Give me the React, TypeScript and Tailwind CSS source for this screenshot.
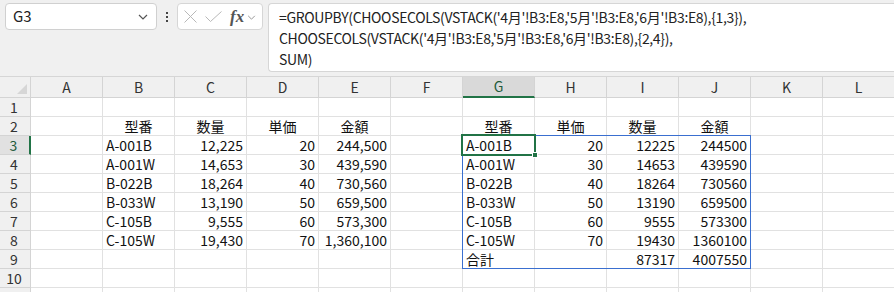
import React from "react";

const COLS = ["A", "B", "C", "D", "E", "F", "G", "H", "I", "J", "K", "L"];

type Align = "l" | "r" | "c";
type Cell = { t: string; a: Align };

const source = [
  ["A-001B", "12,225", "20", "244,500"],
  ["A-001W", "14,653", "30", "439,590"],
  ["B-022B", "18,264", "40", "730,560"],
  ["B-033W", "13,190", "50", "659,500"],
  ["C-105B", "9,555", "60", "573,300"],
  ["C-105W", "19,430", "70", "1,360,100"],
];

const grouped = [
  ["A-001B", "20", "12225", "244500"],
  ["A-001W", "30", "14653", "439590"],
  ["B-022B", "40", "18264", "730560"],
  ["B-033W", "50", "13190", "659500"],
  ["C-105B", "60", "9555", "573300"],
  ["C-105W", "70", "19430", "1360100"],
];

function buildCells() {
  const cells: Record<string, Cell> = {};
  ["型番", "数量", "単価", "金額"].forEach((t, i) => {
    cells[`${"BCDE"[i]}2`] = { t, a: "c" };
  });
  ["型番", "単価", "数量", "金額"].forEach((t, i) => {
    cells[`${"GHIJ"[i]}2`] = { t, a: "c" };
  });
  source.forEach((row, r) => {
    row.forEach((t, i) => {
      cells[`${"BCDE"[i]}${r + 3}`] = { t, a: i === 0 ? "l" : "r" };
    });
  });
  grouped.forEach((row, r) => {
    row.forEach((t, i) => {
      cells[`${"GHIJ"[i]}${r + 3}`] = { t, a: i === 0 ? "l" : "r" };
    });
  });
  cells["G9"] = { t: "合計", a: "l" };
  cells["I9"] = { t: "87317", a: "r" };
  cells["J9"] = { t: "4007550", a: "r" };
  return cells;
}

const cells = buildCells();

const alignClass: Record<Align, string> = {
  l: "justify-start pl-[3px]",
  r: "justify-end pr-[3px]",
  c: "justify-center",
};

function Chevron({ className }: { className: string }) {
  return (
    <svg viewBox="0 0 10 6" className={className} fill="none" stroke="currentColor" strokeWidth="1.2">
      <path d="M1 1l4 4 4-4" />
    </svg>
  );
}

function Toolbar() {
  return (
    <div className="flex h-[77px] items-start border-b border-[#d6d6d6] bg-[#f0f0f0] pl-[5px] pt-[3px]">
      <div className="flex h-[27px] w-[152px] items-center justify-between rounded-[4px] border border-[#d0d0d0] bg-white pl-[7px] pr-[8px]">
        <span className="text-[15px] text-[#222]">G3</span>
        <Chevron className="h-[6px] w-[10px] text-[#555]" />
      </div>
      <div className="flex h-[27px] w-[20px] flex-col items-center justify-center gap-[2px]">
        <span className="h-[2px] w-[2px] bg-[#444]" />
        <span className="h-[2px] w-[2px] bg-[#444]" />
        <span className="h-[2px] w-[2px] bg-[#444]" />
      </div>
      <div className="flex h-[27px] w-[86px] items-center rounded-[4px] border border-[#d6d6d6] bg-white pl-[6px]">
        <svg viewBox="0 0 13 13" className="h-[13px] w-[13px]" fill="none" stroke="#b8b8b8" strokeWidth="1">
          <path d="M0.5 0.5l12 12M12.5 0.5l-12 12" />
        </svg>
        <svg viewBox="0 0 17 11" className="ml-[8px] h-[11px] w-[17px]" fill="none" stroke="#b8b8b8" strokeWidth="1">
          <path d="M0.5 5.5l5 5 11-10" />
        </svg>
        <span className="ml-[8px] font-['Liberation_Serif',serif] text-[17px] font-bold italic leading-none text-[#555]">
          fx
        </span>
        <Chevron className="ml-[3px] mt-[2px] h-[5px] w-[9px] text-[#999]" />
      </div>
      <div className="ml-[5px] h-[69px] flex-1 rounded-l-[4px] border border-r-0 border-[#d6d6d6] bg-white pl-[10px] pt-[3px] text-[14px] leading-[21px] tracking-[-0.35px] text-[#222]">
        <div>=GROUPBY(CHOOSECOLS(VSTACK('4月'!B3:E8,'5月'!B3:E8,'6月'!B3:E8),{"{1,3}"}),</div>
        <div>CHOOSECOLS(VSTACK('4月'!B3:E8,'5月'!B3:E8,'6月'!B3:E8),{"{2,4}"}),</div>
        <div>SUM)</div>
      </div>
    </div>
  );
}

function Sheet() {
  const rows = Array.from({ length: 11 }, (_, i) => i + 1);
  return (
    <div className="relative">
      <div className="grid grid-cols-[31px_repeat(12,72px)]">
        <div className="relative h-[21px] border-r border-b border-[#d4d4d4] bg-[#f0f0f0]">
          <svg viewBox="0 0 10 10" className="absolute bottom-[3px] right-[3px] h-[10px] w-[10px]">
            <path d="M10 0V10H0Z" fill="#d6d6d6" />
          </svg>
        </div>
        {COLS.map((c) =>
          c === "G" ? (
            <div
              key={c}
              className="flex h-[21px] items-center justify-center border-r border-b-2 border-r-[#d4d4d4] border-b-[#217346] bg-[#d9d9d9] text-[14px] text-[#1e5a3a]"
            >
              {c}
            </div>
          ) : (
            <div
              key={c}
              className="flex h-[21px] items-center justify-center border-r border-b border-[#d4d4d4] bg-[#f0f0f0] text-[14px] text-[#333]"
            >
              {c}
            </div>
          )
        )}
        {rows.map((r) => (
          <React.Fragment key={r}>
            {r === 3 ? (
              <div className="flex h-[19px] items-center justify-center border-r-2 border-b border-r-[#217346] border-b-[#d4d4d4] bg-[#e1e1e1] pr-[2px] text-[14px] text-[#1e5a3a]">
                {r}
              </div>
            ) : (
              <div className="flex h-[19px] items-center justify-center border-r border-b border-[#d4d4d4] bg-[#f0f0f0] pr-[2px] text-[14px] text-[#333]">
                {r < 11 ? r : ""}
              </div>
            )}
            {COLS.map((c) => {
              const cell = cells[`${c}${r}`];
              return (
                <div
                  key={c}
                  className={`flex h-[19px] items-center overflow-visible whitespace-nowrap border-r border-b border-[#e1e1e1] bg-white text-[14px] text-[#111] ${
                    cell ? alignClass[cell.a] : ""
                  }`}
                >
                  {cell?.t}
                </div>
              );
            })}
          </React.Fragment>
        ))}
      </div>
      {/* spill range G3:J9 */}
      <div className="pointer-events-none absolute left-[462px] top-[58px] h-[134px] w-[289px] border border-[#3a6fd0]" />
      {/* active cell G3 */}
      <div className="pointer-events-none absolute left-[461px] top-[57px] h-[22px] w-[75px] border-2 border-[#217346]" />
      <div className="pointer-events-none absolute left-[532px] top-[75px] h-[6px] w-[6px] border border-white bg-[#217346]" />
    </div>
  );
}

export default function App() {
  return (
    <div className="h-[292px] w-[894px] overflow-hidden bg-white font-['Noto_Sans_CJK_JP','Noto_Sans',sans-serif]">
      <Toolbar />
      <Sheet />
    </div>
  );
}
